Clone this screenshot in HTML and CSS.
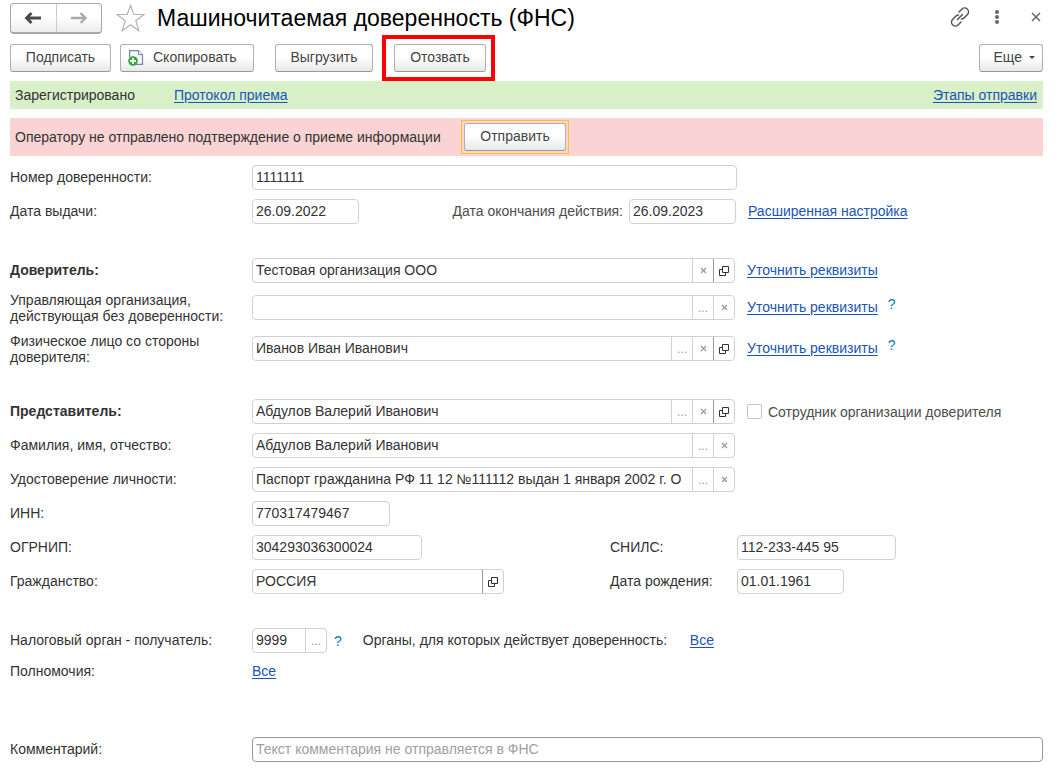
FILE: index.html
```html
<!DOCTYPE html>
<html lang="ru">
<head>
<meta charset="utf-8">
<title>Машиночитаемая доверенность (ФНС)</title>
<link rel="stylesheet" href="styles.css">
</head>
<body>
<svg class="defs" aria-hidden="true">
  <symbol id="open" viewBox="0 0 10 10"><path d="M3.500.5h6v6h-6zM3 3.500H.5v6h6V7" fill="none" stroke="#333"/></symbol>
  <symbol id="clear" viewBox="0 0 7 7"><path d="M1 1l5 5M6 1L1 6" fill="none" stroke="#999" stroke-width="1.200"/></symbol>
</svg>
<header class="header">
  <div class="nav">
    <button class="nav-btn" aria-label="Назад"><svg width="18" height="12" viewBox="0 0 18 12"><path d="M17 6H3M7.500 1L2.500 6l5 5" fill="none" stroke="#4a4a4a" stroke-width="2.800"/></svg></button>
    <button class="nav-btn" aria-label="Вперед"><svg width="18" height="12" viewBox="0 0 18 12"><path d="M1 6h14M10.500 1l5 5-5 5" fill="none" stroke="#aaa" stroke-width="2.400"/></svg></button>
  </div>
  <button class="icon-btn star" aria-label="В избранное"><svg width="29" height="28" viewBox="0 0 29 28"><path d="M14.500 1.500l3.300 9H28l-8.200 6.200 3 10-8.300-6-8.300 6 3-10L1 10.500h10.200z" fill="#fff" stroke="#aeb4ba" stroke-width="1.200"/></svg></button>
  <h1 class="title">Машиночитаемая доверенность (ФНС)</h1>
  <div class="tools">
    <button class="icon-btn" aria-label="Ссылка"><svg width="20" height="20" viewBox="0 0 20 20" fill="none" stroke="#555" stroke-width="1.500" stroke-linecap="round"><path d="M9 5l2.700-2.700a3.800 3.800 0 0 1 5.800 5.200L14 11a3.500 3.500 0 0 1-2.500 1M11 15l-2.700 2.700a3.800 3.800 0 0 1-5.800-5.200L6 9a3.500 3.500 0 0 1 2.500-1M7.500 12.500l5-5"/></svg></button>
    <button class="icon-btn" aria-label="Меню"><svg width="6" height="16" viewBox="0 0 6 16" fill="#666"><circle cx="3" cy="3" r="2"/><circle cx="3" cy="8" r="2"/><circle cx="3" cy="13" r="2"/></svg></button>
    <button class="icon-btn" aria-label="Закрыть"><svg width="10" height="10" viewBox="0 0 10 10"><path d="M1 1l8 8M9 1L1 9" fill="none" stroke="#666" stroke-width="1.500"/></svg></button>
  </div>
</header>

<div class="toolbar">
  <button class="btn">Подписать</button>
  <button class="btn btn-copy"><svg width="16" height="17" viewBox="0 0 16 17"><path d="M1.600 8V1.600h8.900l4 4v9.800H8" fill="#f2f6f8" stroke="#7388a0" stroke-width="1.200"/><path d="M10.500 1.600v4h4" fill="#fff" stroke="#7388a0"/><circle cx="5" cy="12" r="4.800" fill="#35a33b"/><path d="M5 9v6M2 12h6" stroke="#fff" stroke-width="1.800"/></svg>Скопировать</button>
  <button class="btn btn-export">Выгрузить</button>
  <span class="marked"><button class="btn">Отозвать</button></span>
  <button class="btn btn-more">Еще<span class="caret"></span></button>
</div>

<div class="bar bar-ok"><span class="state">Зарегистрировано</span><a href="#">Протокол приема</a><a class="end" href="#">Этапы отправки</a></div>
<div class="bar bar-warn"><span class="warn-text">Оператору не отправлено подтверждение о приеме информации</span><span class="focus"><button class="btn btn-send">Отправить</button></span></div>

<form class="form">
  <div class="row"><label for="num">Номер доверенности:</label><div class="field full"><input id="num" value="1111111"></div></div>
  <div class="row">
    <label for="issued">Дата выдачи:</label>
    <div class="dates"><div class="field date"><input id="issued" value="26.09.2022"></div>
    <label class="inner soft" for="until">Дата окончания действия:</label><div class="field date"><input id="until" value="26.09.2023"></div></div>
    <a class="next" href="#">Расширенная настройка</a>
  </div>

  <div class="row section"><label class="strong" for="principal">Доверитель:</label>
    <div class="field wide"><input id="principal" value="Тестовая организация ООО"><button type="button" aria-label="Очистить"><svg class="x"><use href="#clear"/></svg></button><button type="button" class="open" aria-label="Открыть"><svg class="o"><use href="#open"/></svg></button></div>
    <a class="next" href="#">Уточнить реквизиты</a></div>
  <div class="row tall"><label for="manager">Управляющая организация, действующая без доверенности:</label>
    <div class="field wide"><input id="manager"><button type="button" aria-label="Выбрать">...</button><button type="button" aria-label="Очистить"><svg class="x"><use href="#clear"/></svg></button></div>
    <a class="next" href="#">Уточнить реквизиты</a><button type="button" class="help raised">?</button></div>
  <div class="row tall"><label for="person">Физическое лицо со стороны доверителя:</label>
    <div class="field wide"><input id="person" value="Иванов Иван Иванович"><button type="button" aria-label="Выбрать">...</button><button type="button" aria-label="Очистить"><svg class="x"><use href="#clear"/></svg></button><button type="button" class="open" aria-label="Открыть"><svg class="o"><use href="#open"/></svg></button></div>
    <a class="next" href="#">Уточнить реквизиты</a><button type="button" class="help raised">?</button></div>

  <div class="row section"><label class="strong" for="agent">Представитель:</label>
    <div class="field wide"><input id="agent" value="Абдулов Валерий Иванович"><button type="button" aria-label="Выбрать">...</button><button type="button" aria-label="Очистить"><svg class="x"><use href="#clear"/></svg></button><button type="button" class="open" aria-label="Открыть"><svg class="o"><use href="#open"/></svg></button></div>
    <label class="check soft"><input type="checkbox">Сотрудник организации доверителя</label></div>
  <div class="row"><label for="fio">Фамилия, имя, отчество:</label>
    <div class="field wide"><input id="fio" value="Абдулов Валерий Иванович"><button type="button" aria-label="Выбрать">...</button><button type="button" aria-label="Очистить"><svg class="x"><use href="#clear"/></svg></button></div></div>
  <div class="row"><label for="doc">Удостоверение личности:</label>
    <div class="field wide"><input id="doc" value="Паспорт гражданина РФ 11 12 №111112 выдан 1 января 2002 г. О"><button type="button" aria-label="Выбрать">...</button><button type="button" aria-label="Очистить"><svg class="x"><use href="#clear"/></svg></button></div></div>
  <div class="row"><label for="inn">ИНН:</label><div class="field inn"><input id="inn" value="770317479467"></div></div>
  <div class="row"><label for="ogrn">ОГРНИП:</label><div class="left"><div class="field ogrn"><input id="ogrn" value="304293036300024"></div></div>
    <label class="second" for="snils">СНИЛС:</label><div class="field snils"><input id="snils" value="112-233-445 95"></div></div>
  <div class="row"><label for="country">Гражданство:</label><div class="left"><div class="field country"><input id="country" value="РОССИЯ"><button type="button" class="open" aria-label="Открыть"><svg class="o"><use href="#open"/></svg></button></div></div>
    <label class="second" for="birth">Дата рождения:</label><div class="field date"><input id="birth" value="01.01.1961"></div></div>

  <div class="row section"><label for="tax">Налоговый орган - получатель:</label>
    <div class="field tax"><input id="tax" value="9999"><button type="button" aria-label="Выбрать">...</button></div><button type="button" class="help">?</button>
    <span class="bodies">Органы, для которых действует доверенность:</span><a href="#">Все</a></div>
  <div class="row powers"><span class="name">Полномочия:</span><a href="#">Все</a></div>
  <div class="row comment"><label for="comment">Комментарий:</label><div class="field"><input id="comment" placeholder="Текст комментария не отправляется в ФНС"></div></div>
</form>
</body>
</html>
```
FILE: styles.css
```css
* { box-sizing: border-box; }
body {
  margin: 0;
  padding: 0 14px 8px 10px;
  background: #fff;
  color: #333;
  font: 14px/16px "Liberation Sans", Arial, sans-serif;
}
button, input { font: inherit; color: inherit; margin: 0; }
button { padding: 0; cursor: pointer; }
a { color: #1a54b8; text-decoration: underline; text-underline-offset: 2px; white-space: nowrap; }
.defs { display: none; }

.header { display: flex; align-items: center; height: 36px; }
.nav {
  display: flex;
  width: 92px;
  height: 31px;
  border: 1px solid #a9a9a9;
  border-bottom-width: 2px;
  border-radius: 4px;
  background: linear-gradient(#fff 45%, #ececec);
}
.nav-btn { flex: 1; display: flex; align-items: center; justify-content: center; border: 0; background: none; }
.nav-btn + .nav-btn { border-left: 1px solid #ccc; }
.icon-btn { display: flex; border: 0; background: none; }
.star { margin-left: 14px; }
.title { margin: 0 0 0 12px; font-size: 23px; line-height: 28px; font-weight: 400; color: #000; white-space: nowrap; }
.tools { display: flex; align-items: center; margin: 0 2px 2px auto; gap: 24px; }
.tools .icon-btn:last-child { margin-left: 7px; }

.toolbar { display: flex; align-items: center; height: 45px; padding-bottom: 1px; }
.btn {
  height: 28px;
  padding: 0 14px 2px;
  border: 1px solid #b0b0b0;
  border-bottom-color: #999;
  border-radius: 3px;
  background: linear-gradient(#fff 45%, #e8e8e8);
  color: #444;
  font-size: 14px;
  white-space: nowrap;
}
.toolbar > .btn:first-child { min-width: 101px; }
.btn-copy { display: flex; align-items: center; gap: 9px; min-width: 134px; margin-left: 9px; padding-left: 7px; }
.btn-export { min-width: 98px; margin: 0 21px; }
.marked { position: relative; }
.marked .btn { min-width: 92px; }
.marked::after {
  content: "";
  position: absolute;
  inset: -9px -9px -9px -12px;
  border: 4px solid #fe0000;
  pointer-events: none;
}
.btn-more { display: flex; align-items: center; gap: 7px; margin-left: auto; padding-right: 7px; }
.caret { border: 3px solid transparent; border-top-color: #444; border-bottom: 0; }

.bar { display: flex; align-items: center; padding: 0 6px 0 5px; }
.bar-ok { height: 28px; background: #d8f0c8; }
.state { width: 159px; }
.end { margin-left: auto; }
.bar-warn { height: 38px; margin-top: 9px; background: #fad4d4; }
.warn-text { min-width: 438px; }
.focus { display: flex; margin-left: 8px; padding: 2px; border: 1px solid #ffc31e; }
.btn-send { min-width: 102px; }

.form { display: flex; flex-direction: column; gap: 9px; padding-top: 9px; }
.row { display: flex; align-items: center; min-height: 25px; }
.row > label, .row > a, .row > span { padding-bottom: 2px; }
.row > label:first-child, .name { flex: none; width: 242px; padding-right: 14px; }
.row.tall > label { padding-bottom: 0; }
.tall .field { margin-bottom: 1px; }
.strong { font-weight: 700; }
.soft { color: #4d4d4d; }
.section { margin-top: 25px; }
.field {
  display: flex;
  height: 25px;
  min-width: 0;
  border: 1px solid #d0d0d0;
  border-radius: 4px;
  background: #fff;
  overflow: hidden;
}
.field input { flex: 1; width: 0; min-width: 0; padding: 0 0 2px 3px; border: 0; outline: 0; background: none; }
.field button { flex: none; width: 21px; border: 0; border-left: 1px solid #d0d0d0; background: none; color: #999; font-size: 12px; }
.field .open { border-left-color: #999; }
.field svg { display: block; margin: 0 auto; }
.x { width: 7px; height: 7px; }
.o { width: 10px; height: 10px; }
.full { flex: 0 1 485px; }
.wide { flex: 0 1 483px; }
.dates { display: flex; align-items: center; flex: 0 1 484px; }
.date { width: 107px; }
.inner { margin: 0 6px 0 auto; padding-bottom: 2px; white-space: nowrap; }
.next { margin-left: 12px; }
.help { border: 0; background: none; color: #0a78c0; font-size: 14px; margin-left: 7px; }
.raised { margin-left: 10px; padding-bottom: 8px; }
.row > .check { display: flex; align-items: center; gap: 6px; margin-left: 12px; padding: 0; white-space: nowrap; }
.check input { appearance: none; width: 15px; height: 15px; border: 1px solid #c4c4c4; border-radius: 2px; background: #fff; }
.inn { width: 138px; }
.left { flex: 0 1 358px; }
.ogrn { width: 170px; }
.country { width: 252px; }
.second { width: 127px; }
.snils { width: 159px; }
.tax { width: 75px; }
.bodies { min-width: 311px; margin: 0 16px 0 21px; }
.powers { margin-top: -3px; }
.comment { margin-top: 44px; }
.comment .field { flex: 1; border-color: #999; }
.comment input::placeholder { color: #a0a0a0; opacity: 1; }
```
